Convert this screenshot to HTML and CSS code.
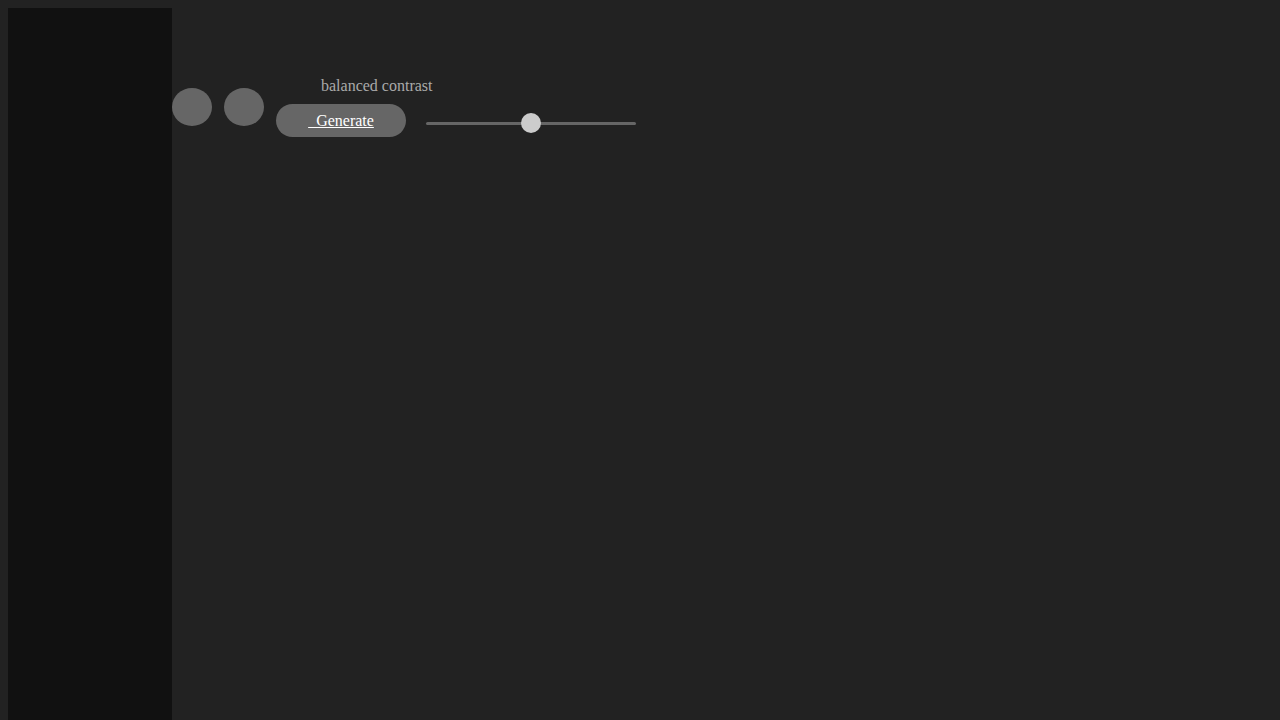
FILE: index.html
```html
<!DOCTYPE html>
<html>
<head>
<meta charset="utf-8">
<link rel="stylesheet" href="styles.css">
</head>
<body>
  <div class="layout">
    <aside class="sidebar"></aside>
    <main class="main">
      <div class="toolbar">
        <div class="dot"></div>
        <div class="dot"></div>
        <div class="gen-group">
          <div class="label">balanced contrast</div>
          <button class="gen-btn"><a class="gen-link" href="#">&nbsp;&nbsp;Generate</a></button>
        </div>
        <input class="slider" type="range" min="0" max="100" value="50">
      </div>
    </main>
  </div>
</body>
</html>
```
FILE: styles.css
```css
html, body {
  background: #222222;
}
body {
  margin: 8px 8px 0 8px;
  font-family: "Liberation Serif", "Times New Roman", serif;
  font-size: 16px;
}
.layout {
  display: flex;
  height: calc(100vh - 8px);
}
.sidebar {
  width: 164px;
  flex: none;
  background: #111111;
}
.main {
  flex: 1;
  padding-top: 69px;
}
.toolbar {
  display: flex;
  align-items: center;
  gap: 12px;
  height: 60px;
}
.dot {
  width: 40px;
  height: 38px;
  border-radius: 50%;
  background: #666666;
}
.gen-group {
  display: flex;
  flex-direction: column;
  width: 130px;
  height: 60px;
}
.label {
  color: #aaaaaa;
  line-height: 18px;
  height: 18px;
  margin-left: 45px;
  margin-bottom: 9px;
  white-space: nowrap;
}
.gen-btn {
  width: 130px;
  height: 33px;
  border: none;
  border-radius: 17px;
  background: #666666;
  padding: 0;
  font-family: "Liberation Serif", "Times New Roman", serif;
  font-size: 16px;
  display: flex;
  align-items: center;
  justify-content: center;
}
.gen-link {
  color: #ffffff;
  text-decoration: underline;
}
.slider {
  -webkit-appearance: none;
  appearance: none;
  width: 210px;
  height: 20px;
  margin: 0 0 4px 8px;
  align-self: flex-end;
  background: transparent;
}
.slider::-webkit-slider-runnable-track {
  height: 3px;
  background: #666666;
  border-radius: 2px;
}
.slider::-webkit-slider-thumb {
  -webkit-appearance: none;
  width: 20px;
  height: 20px;
  border-radius: 50%;
  background: #cccccc;
  margin-top: -8.5px;
  border: none;
}
```
